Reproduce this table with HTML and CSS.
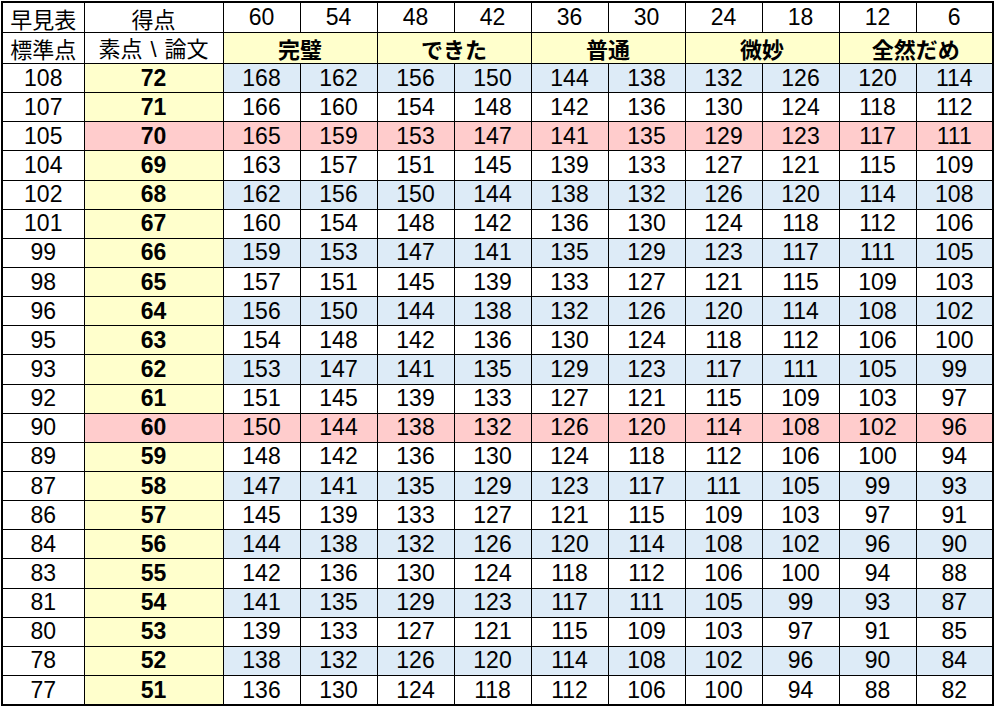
FILE: index.html
```html
<!DOCTYPE html>
<html lang="ja">
<head>
<meta charset="utf-8">
<link rel="stylesheet" href="styles.css">
</head>
<body>
<table class="sheet">
<colgroup>
<col class="c-std"><col class="c-raw">
<col class="c-d"><col class="c-d"><col class="c-d"><col class="c-d"><col class="c-d">
<col class="c-d"><col class="c-d"><col class="c-d"><col class="c-d"><col class="c-d">
</colgroup>
<tbody>
<tr class="h1">
<td class="jp">早見表</td><td class="jp">得点</td>
<td>60</td><td>54</td><td>48</td><td>42</td><td>36</td><td>30</td><td>24</td><td>18</td><td>12</td><td>6</td>
</tr>
<tr class="h2">
<td class="jp">標準点</td><td class="jp">素点<span class="sep">\</span>論文</td>
<td class="jp grade" colspan="2">完璧</td>
<td class="jp grade" colspan="2">できた</td>
<td class="jp grade" colspan="2">普通</td>
<td class="jp grade" colspan="2">微妙</td>
<td class="jp grade" colspan="2">全然だめ</td>
</tr>
</tbody>
<tbody id="rows"></tbody>
</table>
<script src="app.js"></script>
</body>
</html>
```
FILE: styles.css
```css
html, body {
  margin: 0;
  padding: 0;
  background: #ffffff;
}
body {
  padding: 1px 0 0 1px;
}
.sheet {
  border-collapse: collapse;
  table-layout: fixed;
  width: 993px;
  border: 2px solid #000;
  font-family: "Liberation Sans", Arial, "Noto Sans CJK JP", sans-serif;
  font-size: 23px;
  color: #000;
}
.c-std { width: 82px; }
.c-raw { width: 139px; }
.c-d { width: 77px; }
.sheet td {
  border: 1px solid #000;
  text-align: center;
  vertical-align: middle;
  padding: 0;
  line-height: 1;
  white-space: nowrap;
}
.h1 td { height: 29px; }
.h2 td { height: 30px; }
.jp {
  font-family: "Noto Sans CJK JP", sans-serif;
  font-size: 22px;
}
.sep {
  font-family: "Liberation Sans", sans-serif;
  padding: 0 8px;
}
.grade {
  background: #ffffcc;
  font-weight: bold;
}
.data td { height: 28.15px; }
.raw {
  background: #ffffcc;
  font-weight: bold;
}
.blue td.v { background: #ddebf7; }
.pink td.v, .pink td.raw { background: #ffcccc; }
```
FILE: app.js
```js
(function () {
  var body = document.getElementById('rows');
  var std = [108,107,105,104,102,101,99,98,96,95,93,92,90,89,87,86,84,83,81,80,78,77];
  var first = [168,166,165,163,162,160,159,157,156,154,153,151,150,148,147,145,144,142,141,139,138,136];
  var html = '';
  for (var i = 0; i < 22; i++) {
    var raw = 72 - i;
    var cls = 'data';
    if (raw === 70 || raw === 60) cls += ' pink';
    else if (raw % 2 === 0) cls += ' blue';
    html += '<tr class="' + cls + '"><td>' + std[i] + '</td><td class="raw">' + raw + '</td>';
    for (var j = 0; j < 10; j++) {
      html += '<td class="v">' + (first[i] - 6 * j) + '</td>';
    }
    html += '</tr>';
  }
  body.innerHTML = html;
})();
```
